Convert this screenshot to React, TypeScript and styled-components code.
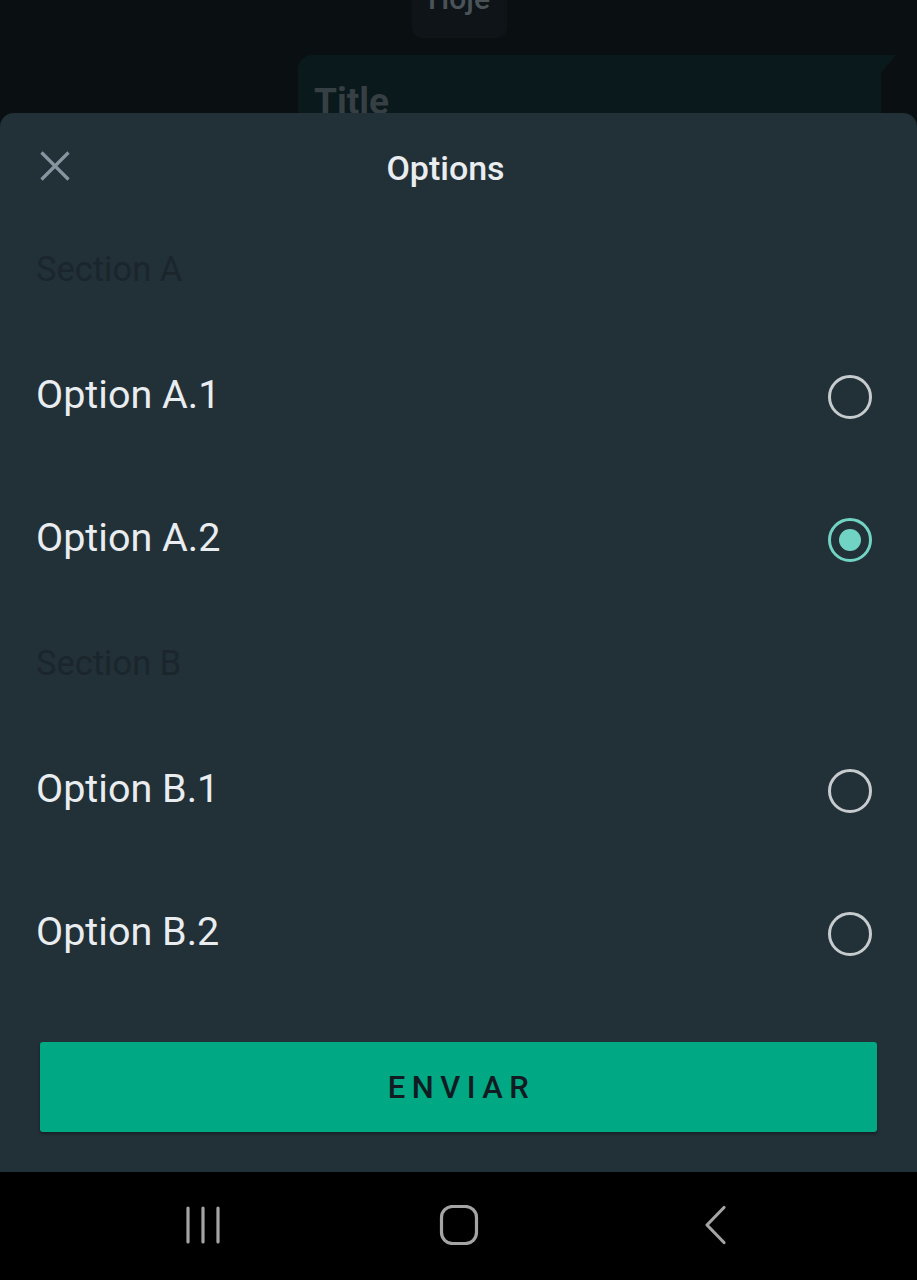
import React, { useState } from "react";
import styled, { createGlobalStyle } from "styled-components";

const Global = createGlobalStyle`
  html, body { margin: 0; padding: 0; background: #0a0f12; }
  body { font-family: Roboto, "Noto Sans", sans-serif; -webkit-font-smoothing: antialiased; }
  * { box-sizing: border-box; }
`;

const Screen = styled.div`
  width: 917px;
  height: 1280px;
  display: flex;
  flex-direction: column;
  background: #0a0f12;
  overflow: hidden;
`;

const Backdrop = styled.div`
  height: 113px;
  flex: none;
  overflow: hidden;
  display: flex;
  flex-direction: column;
  align-items: stretch;
`;

const DayPill = styled.div`
  flex: none;
  align-self: center;
  margin-top: -14px;
  width: 95px;
  height: 52px;
  border-radius: 10px;
  background: #0e1418;
  color: #4a5358;
  font-size: 30px;
  font-weight: 500;
  display: flex;
  align-items: flex-start;
  justify-content: center;
  line-height: 26px;
  padding-top: 0;
  margin-left: 1px;
`;

const Bubble = styled.div`
  flex: none;
  margin-top: 17px;
  margin-left: 298px;
  width: 583px;
  height: 100px;
  background: #0a191c;
  border-radius: 14px 0 14px 14px;
  padding: 27px 0 0 16px;
  color: #363f43;
  font-size: 37px;
  font-weight: 700;
  line-height: 40px;
  position: relative;
  &::after {
    content: "";
    position: absolute;
    top: 0;
    right: -15px;
    width: 0;
    height: 0;
    border-top: 18px solid #0a191c;
    border-right: 15px solid transparent;
  }
`;

const Sheet = styled.div`
  flex: none;
  height: 1059px;
  background: #223038;
  border-radius: 14px 14px 0 0;
  display: flex;
  flex-direction: column;
`;

const Header = styled.div`
  height: 104px;
  padding-top: 6px;
  display: grid;
  grid-template-columns: 110px 1fr 110px;
  align-items: center;
`;

const CloseButton = styled.button`
  width: 110px;
  height: 98px;
  background: none;
  border: 0;
  padding: 0 0 4px 0;
  display: flex;
  align-items: center;
  justify-content: center;
  cursor: pointer;
`;

const HeaderTitle = styled.div`
  text-align: center;
  color: #e9edef;
  font-size: 34px;
  font-weight: 500;
  margin-left: -26px;
`;

const SectionTitle = styled.div`
  height: 108px;
  display: flex;
  align-items: center;
  padding: 0 36px 4px;
  color: #1b262c;
  font-size: 34.5px;
`;

const OptionRow = styled.label`
  height: 143px;
  display: flex;
  align-items: center;
  justify-content: space-between;
  padding: 0 45px 0 36px;
  cursor: pointer;
`;

const OptionText = styled.span`
  color: #e9edef;
  font-size: 39.5px;
  margin-top: -4px;
`;

const Radio = styled.span<{ $on: boolean }>`
  width: 44px;
  height: 44px;
  border-radius: 50%;
  border: 3.5px solid ${(p) => (p.$on ? "#71d3c3" : "#c6cbce")};
  display: flex;
  align-items: center;
  justify-content: center;
  &::after {
    content: "";
    width: 22px;
    height: 22px;
    border-radius: 50%;
    background: #71d3c3;
    display: ${(p) => (p.$on ? "block" : "none")};
  }
`;

const Footer = styled.div`
  padding: 37px 40px 0;
`;

const SendButton = styled.button`
  width: 100%;
  height: 90px;
  border: 0;
  border-radius: 3px;
  background: #00a884;
  box-shadow: 0 2px 3px rgba(0, 0, 0, 0.35);
  color: #111b21;
  font-family: Roboto, sans-serif;
  font-size: 31px;
  font-weight: 500;
  letter-spacing: 6.5px;
  padding: 0 0 0 6px;
  cursor: pointer;
`;

const NavBar = styled.div`
  flex: 1;
  background: #000;
  display: flex;
  align-items: center;
  justify-content: center;
  gap: 196px;
  padding-bottom: 3px;
`;

const NavIcon = styled.div`
  width: 60px;
  height: 60px;
  display: flex;
  align-items: center;
  justify-content: center;
`;

type Opt = { id: string; label: string };
const sections: { title: string; options: Opt[] }[] = [
  { title: "Section A", options: [{ id: "a1", label: "Option A.1" }, { id: "a2", label: "Option A.2" }] },
  { title: "Section B", options: [{ id: "b1", label: "Option B.1" }, { id: "b2", label: "Option B.2" }] },
];

export default function App() {
  const [sel, setSel] = useState("a2");
  return (
    <Screen>
      <Global />
      <Backdrop>
        <DayPill>Hoje</DayPill>
        <Bubble>Title</Bubble>
      </Backdrop>
      <Sheet>
        <Header>
          <CloseButton aria-label="close">
            <svg width="30" height="30" viewBox="0 0 30 30">
              <path d="M1.5 1.5 L28.5 28.5 M28.5 1.5 L1.5 28.5" stroke="#8696a0" strokeWidth="3.2" fill="none" />
            </svg>
          </CloseButton>
          <HeaderTitle>Options</HeaderTitle>
          <div />
        </Header>
        {sections.map((s) => (
          <React.Fragment key={s.title}>
            <SectionTitle>{s.title}</SectionTitle>
            {s.options.map((o) => (
              <OptionRow key={o.id} onClick={() => setSel(o.id)}>
                <OptionText>{o.label}</OptionText>
                <Radio $on={sel === o.id} />
              </OptionRow>
            ))}
          </React.Fragment>
        ))}
        <Footer>
          <SendButton>ENVIAR</SendButton>
        </Footer>
      </Sheet>
      <NavBar>
        <NavIcon>
          <svg width="40" height="40" viewBox="0 0 40 40">
            <path d="M5 3 V37 M20 3 V37 M35 3 V37" stroke="#a4a4a4" strokeWidth="3.2" strokeLinecap="round" fill="none" />
          </svg>
        </NavIcon>
        <NavIcon>
          <svg width="40" height="40" viewBox="0 0 40 40">
            <rect x="2.5" y="1.5" width="35" height="37" rx="11" stroke="#a4a4a4" strokeWidth="3.2" fill="none" />
          </svg>
        </NavIcon>
        <NavIcon>
          <svg width="40" height="40" viewBox="0 0 40 40">
            <path d="M29 2.5 L12 20 L29 37.5" stroke="#a4a4a4" strokeWidth="3.2" strokeLinecap="round" strokeLinejoin="round" fill="none" />
          </svg>
        </NavIcon>
      </NavBar>
    </Screen>
  );
}
